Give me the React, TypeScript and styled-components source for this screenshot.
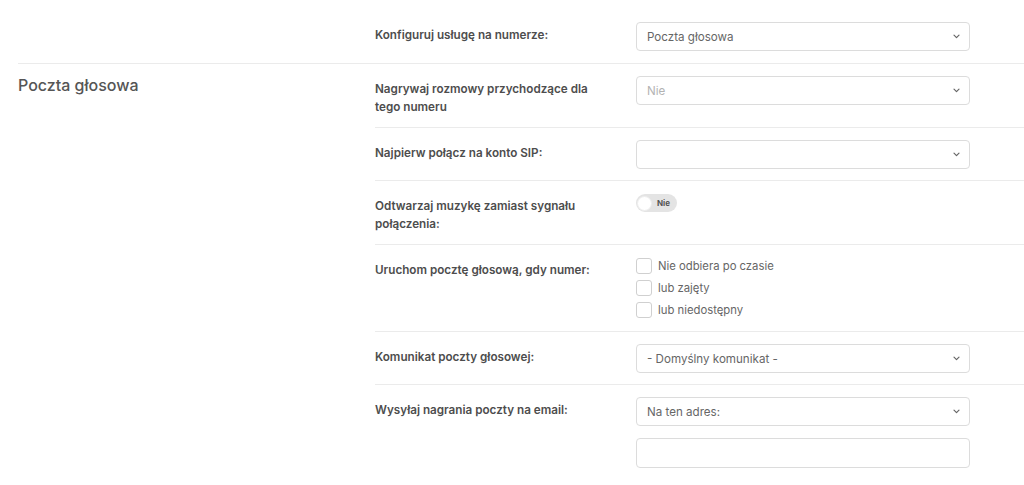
import { FC, ReactNode } from 'react';
import styled, { createGlobalStyle } from 'styled-components';

const GlobalStyle = createGlobalStyle`
  html, body {
    margin: 0;
    padding: 0;
    background: #ffffff;
  }
  body {
    font-family: Inter, "Open Sans", "Liberation Sans", sans-serif;
    color: #555555;
  }
`;

const Page = styled.div`
  padding-left: 18px;
`;

const Section = styled.div<{ $divided?: boolean }>`
  display: flex;
  border-top: ${(p) => (p.$divided ? '1px solid #ebebeb' : 'none')};
`;

const SectionTitle = styled.div`
  width: 357px;
  flex-shrink: 0;
  padding-top: 12px;
  font-size: 16px;
  font-weight: 500;
  color: #555555;
  line-height: 18px;
`;

const Rows = styled.div`
  flex: 1;
  display: flex;
  flex-direction: column;
`;

const Row = styled.div<{ $top?: boolean; $bare?: boolean }>`
  display: flex;
  padding: ${(p) => (p.$top ? '22px 0 12px' : '12px 0 11px')};
  border-top: ${(p) => (p.$bare ? 'none' : '1px solid #ebebeb')};
`;

const Label = styled.div`
  width: 222px;
  margin-right: 39px;
  padding-top: 4px;
  font-size: 11.7px;
  font-weight: 600;
  line-height: 18px;
  color: #4d4d4d;
`;

const Field = styled.div`
  width: 334px;
  display: flex;
  flex-direction: column;
  gap: 12px;
`;

const SelectBox = styled.div<{ $muted?: boolean }>`
  height: 29px;
  box-sizing: border-box;
  border: 1px solid #dcdcdc;
  border-radius: 4px;
  display: flex;
  align-items: center;
  justify-content: space-between;
  padding: 0 9px 0 10px;
  font-size: 11.6px;
  color: ${(p) => (p.$muted ? '#b3b3b3' : '#666666')};
  background: #ffffff;
`;

const TextInput = styled.div`
  height: 30px;
  box-sizing: border-box;
  border: 1px solid #dcdcdc;
  border-radius: 4px;
  background: #ffffff;
`;

const Toggle = styled.div`
  margin-top: 1px;
  width: 41px;
  height: 18px;
  border-radius: 9px;
  background: #e4e4e4;
  display: flex;
  align-items: center;
  padding: 0 1px;
  box-sizing: border-box;
  gap: 5px;
`;

const Knob = styled.div`
  width: 15px;
  height: 15px;
  box-sizing: border-box;
  border-radius: 50%;
  border: 1px solid #eeeeee;
  background: #ffffff;
`;

const ToggleText = styled.span`
  font-size: 8px;
  font-weight: 700;
  color: #555555;
`;

const Checks = styled.div`
  display: flex;
  flex-direction: column;
  gap: 6px;
  padding: 1px 0 2px;
`;

const CheckRow = styled.label`
  display: flex;
  align-items: center;
  gap: 6px;
  font-size: 11.3px;
  color: #666666;
  line-height: 16px;
`;

const CheckBox = styled.span`
  width: 16px;
  height: 16px;
  box-sizing: border-box;
  border: 1px solid #d0d0d0;
  border-radius: 3px;
  background: #ffffff;
`;

const Chevron: FC = () => (
  <svg width="7" height="5" viewBox="0 0 7 5" fill="none">
    <path d="M1 1.2l2.5 2.5 2.5-2.5" stroke="#666" strokeWidth="1.2" strokeLinecap="round" strokeLinejoin="round" />
  </svg>
);

const Select: FC<{ value?: string; muted?: boolean }> = ({ value, muted }) => (
  <SelectBox $muted={muted}>
    <span>{value}</span>
    <Chevron />
  </SelectBox>
);

interface RowProps {
  label: ReactNode;
  top?: boolean;
  bare?: boolean;
  children: ReactNode;
}

const FormRow: FC<RowProps> = ({ label, top, bare, children }) => (
  <Row $top={top} $bare={bare}>
    <Label>{label}</Label>
    <Field>{children}</Field>
  </Row>
);

export default function App() {
  return (
    <Page>
      <GlobalStyle />
      <Section>
        <SectionTitle />
        <Rows>
          <FormRow label="Konfiguruj usługę na numerze:" top bare>
            <Select value="Poczta głosowa" />
          </FormRow>
        </Rows>
      </Section>
      <Section $divided>
        <SectionTitle>Poczta głosowa</SectionTitle>
        <Rows>
          <FormRow label="Nagrywaj rozmowy przychodzące dla tego numeru" bare>
            <Select value="Nie" muted />
          </FormRow>
          <FormRow label="Najpierw połącz na konto SIP:">
            <Select />
          </FormRow>
          <FormRow label="Odtwarzaj muzykę zamiast sygnału połączenia:">
            <Toggle>
              <Knob />
              <ToggleText>Nie</ToggleText>
            </Toggle>
          </FormRow>
          <FormRow label="Uruchom pocztę głosową, gdy numer:">
            <Checks>
              {['Nie odbiera po czasie', 'lub zajęty', 'lub niedostępny'].map((t) => (
                <CheckRow key={t}>
                  <CheckBox />
                  {t}
                </CheckRow>
              ))}
            </Checks>
          </FormRow>
          <FormRow label="Komunikat poczty głosowej:">
            <Select value="- Domyślny komunikat -" />
          </FormRow>
          <FormRow label="Wysyłaj nagrania poczty na email:">
            <Select value="Na ten adres:" />
            <TextInput />
          </FormRow>
        </Rows>
      </Section>
    </Page>
  );
}
